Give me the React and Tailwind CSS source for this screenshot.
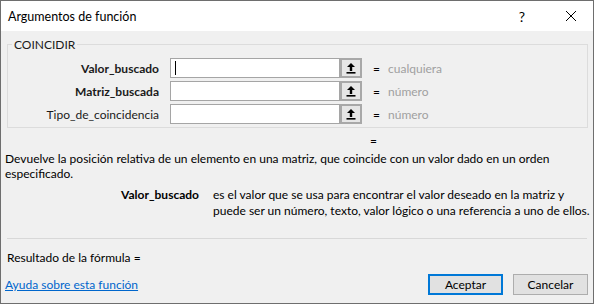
import React from 'react';

const font = { fontFamily: 'Lato, "Noto Sans", "Liberation Sans", sans-serif' };

function RefButton() {
  return (
    <div className="w-[22px] h-[20px] border-2 border-[#a8a8a8] bg-[#e6e6e6] flex items-center justify-center">
      <svg width="10" height="12" viewBox="0 0 10 12">
        <path d="M5 1 L9 5 L6.2 5 L6.2 9 L3.8 9 L3.8 5 L1 5 Z" fill="#000" />
        <rect x="0.5" y="10" width="9" height="1.6" fill="#000" />
      </svg>
    </div>
  );
}

function ArgRow({ label, bold, value, cursor }) {
  return (
    <div className="flex items-center h-[20px]">
      <div className={`w-[152px] text-right pr-[1px] ${bold ? 'font-bold' : ''}`}>{label}</div>
      <div className="ml-[10px] w-[170px] h-[20px] bg-white border border-[#a5a5a5] flex items-center">
        {cursor && <div className="ml-[4px] w-[1px] h-[14px] bg-black" />}
      </div>
      <RefButton />
      <div className="ml-[11px] w-[15px] text-black">=</div>
      <div className="text-[#a0a0a0]">{value}</div>
    </div>
  );
}

export default function App() {
  return (
    <div className="w-[594px] h-[307px] bg-white text-[12px] leading-[15px] text-[#1a1a1a]" style={font}>
      <div className="w-[594px] h-[304px] border border-[#6e6e6e] bg-[#f0f0f0] flex flex-col">
        {/* barra de título */}
        <div className="h-[30px] bg-white flex items-center pl-[7px] shrink-0">
          <span className="text-[12.5px] text-black">Argumentos de función</span>
          <span className="ml-auto text-[14px] text-black">?</span>
          <svg className="ml-[40px] mr-[16px]" width="12" height="12" viewBox="0 0 12 12">
            <path d="M1 1 L11 11 M11 1 L1 11" stroke="#000" strokeWidth="1" />
          </svg>
        </div>

        {/* grupo COINCIDIR */}
        <div className="relative mt-[13px] ml-[6px] w-[581px] border border-[#dcdcdc] pt-[13px] pb-[3px] flex flex-col gap-[3px]">
          <span className="absolute -top-[8px] left-[4px] px-[2px] bg-[#f0f0f0]">COINCIDIR</span>
          <ArgRow label="Valor_buscado" bold value="cualquiera" cursor />
          <ArgRow label="Matriz_buscada" bold value="número" />
          <ArgRow label="Tipo_de_coincidencia" value="número" />
        </div>

        <div className="mt-[5px] pl-[369px] text-black">=</div>

        <div className="mt-[3px] pl-[4px] text-black whitespace-nowrap">
          Devuelve la posición relativa de un elemento en una matriz, que coincide con un valor dado en un orden
          <br />
          especificado.
        </div>

        <div className="mt-[6px] flex text-black leading-[16px] whitespace-nowrap">
          <div className="w-[198px] text-right font-bold">Valor_buscado</div>
          <div className="ml-[14px]">
            es el valor que se usa para encontrar el valor deseado en la matriz y
            <br />
            puede ser un número, texto, valor lógico o una referencia a uno de ellos.
          </div>
        </div>

        <div className="mt-[19px] mx-[6px] h-[1px] bg-[#d8d8d8]" />

        <div className="mt-[11px] pl-[6px] text-black">Resultado de la fórmula =</div>

        <div className="mt-[9px] flex items-center">
          <a className="pl-[4px] text-[#0066cc] underline">Ayuda sobre esta función</a>
          <button className="ml-auto w-[75px] h-[21px] border-2 border-[#0078d7] bg-[#e1e1e1] text-black">Aceptar</button>
          <button className="ml-[10px] mr-[5px] w-[75px] h-[21px] border border-[#adadad] bg-[#e1e1e1] text-black">Cancelar</button>
        </div>
      </div>
    </div>
  );
}
